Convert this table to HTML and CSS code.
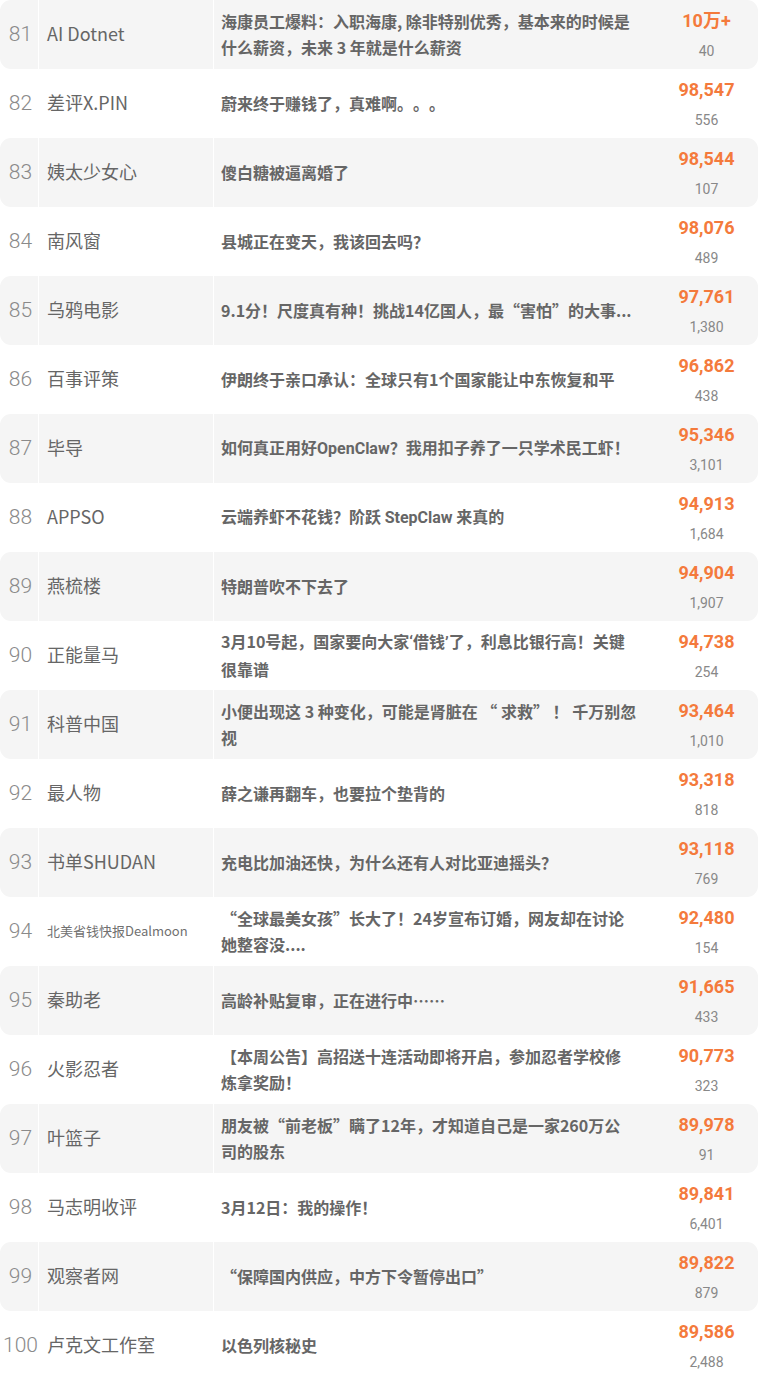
FILE: index.html
```html
<!DOCTYPE html>
<html lang="zh-CN">
<head>
<meta charset="utf-8">
<title>排行</title>
<link rel="stylesheet" href="styles.css">
</head>
<body>
<div class="list">
  <div class="row shade"><div class="rank">81</div><div class="name">AI Dotnet</div><div class="title"><p class="text">海康员工爆料：入职海康, 除非特别优秀，基本来的时候是<br>什么薪资，未来 3 年就是什么薪资</p></div><div class="nums"><span class="main">10万+</span><span class="sub">40</span></div></div>
  <div class="row"><div class="rank">82</div><div class="name">差评X.PIN</div><div class="title"><p class="text">蔚来终于赚钱了，真难啊。。。</p></div><div class="nums"><span class="main">98,547</span><span class="sub">556</span></div></div>
  <div class="row shade"><div class="rank">83</div><div class="name">姨太少女心</div><div class="title"><p class="text">傻白糖被逼离婚了</p></div><div class="nums"><span class="main">98,544</span><span class="sub">107</span></div></div>
  <div class="row"><div class="rank">84</div><div class="name">南风窗</div><div class="title"><p class="text">县城正在变天，我该回去吗？</p></div><div class="nums"><span class="main">98,076</span><span class="sub">489</span></div></div>
  <div class="row shade"><div class="rank">85</div><div class="name">乌鸦电影</div><div class="title"><p class="text">9.1分！尺度真有种！挑战14亿国人，最“害怕”的大事...</p></div><div class="nums"><span class="main">97,761</span><span class="sub">1,380</span></div></div>
  <div class="row"><div class="rank">86</div><div class="name">百事评策</div><div class="title"><p class="text">伊朗终于亲口承认：全球只有1个国家能让中东恢复和平</p></div><div class="nums"><span class="main">96,862</span><span class="sub">438</span></div></div>
  <div class="row shade"><div class="rank">87</div><div class="name">毕导</div><div class="title"><p class="text">如何真正用好<span class="latin">OpenClaw</span>？我用扣子养了一只学术民工虾！</p></div><div class="nums"><span class="main">95,346</span><span class="sub">3,101</span></div></div>
  <div class="row"><div class="rank">88</div><div class="name">APPSO</div><div class="title"><p class="text">云端养虾不花钱？阶跃 <span class="latin">StepClaw</span> 来真的</p></div><div class="nums"><span class="main">94,913</span><span class="sub">1,684</span></div></div>
  <div class="row shade"><div class="rank">89</div><div class="name">燕梳楼</div><div class="title"><p class="text">特朗普吹不下去了</p></div><div class="nums"><span class="main">94,904</span><span class="sub">1,907</span></div></div>
  <div class="row"><div class="rank">90</div><div class="name">正能量马</div><div class="title"><p class="text">3月10号起，国家要向大家<span class="latin">‘</span>借钱<span class="latin">’</span>了，利息比银行高！关键<br>很靠谱</p></div><div class="nums"><span class="main">94,738</span><span class="sub">254</span></div></div>
  <div class="row shade"><div class="rank">91</div><div class="name">科普中国</div><div class="title"><p class="text">小便出现这 3 种变化，可能是肾脏在 “ 求救” ！ 千万别忽<br>视</p></div><div class="nums"><span class="main">93,464</span><span class="sub">1,010</span></div></div>
  <div class="row"><div class="rank">92</div><div class="name">最人物</div><div class="title"><p class="text">薛之谦再翻车，也要拉个垫背的</p></div><div class="nums"><span class="main">93,318</span><span class="sub">818</span></div></div>
  <div class="row shade"><div class="rank">93</div><div class="name">书单SHUDAN</div><div class="title"><p class="text">充电比加油还快，为什么还有人对比亚迪摇头？</p></div><div class="nums"><span class="main">93,118</span><span class="sub">769</span></div></div>
  <div class="row"><div class="rank">94</div><div class="name small">北美省钱快报Dealmoon</div><div class="title"><p class="text">“全球最美女孩”长大了！24岁宣布订婚，网友却在讨论<br>她整容没....</p></div><div class="nums"><span class="main">92,480</span><span class="sub">154</span></div></div>
  <div class="row shade"><div class="rank">95</div><div class="name">秦助老</div><div class="title"><p class="text">高龄补贴复审，正在进行中……</p></div><div class="nums"><span class="main">91,665</span><span class="sub">433</span></div></div>
  <div class="row"><div class="rank">96</div><div class="name">火影忍者</div><div class="title"><p class="text">【本周公告】高招送十连活动即将开启，参加忍者学校修<br>炼拿奖励！</p></div><div class="nums"><span class="main">90,773</span><span class="sub">323</span></div></div>
  <div class="row shade"><div class="rank">97</div><div class="name">叶篮子</div><div class="title"><p class="text">朋友被“前老板”瞒了12年，才知道自己是一家260万公<br>司的股东</p></div><div class="nums"><span class="main">89,978</span><span class="sub">91</span></div></div>
  <div class="row"><div class="rank">98</div><div class="name">马志明收评</div><div class="title"><p class="text">3月12日：我的操作！</p></div><div class="nums"><span class="main">89,841</span><span class="sub">6,401</span></div></div>
  <div class="row shade"><div class="rank">99</div><div class="name">观察者网</div><div class="title"><p class="text">“保障国内供应，中方下令暂停出口”</p></div><div class="nums"><span class="main">89,822</span><span class="sub">879</span></div></div>
  <div class="row"><div class="rank">100</div><div class="name">卢克文工作室</div><div class="title"><p class="text">以色列核秘史</p></div><div class="nums"><span class="main">89,586</span><span class="sub">2,488</span></div></div>
</div>
</body>
</html>
```
FILE: styles.css
```css
html, body {
  margin: 0;
  padding: 0;
  background: #ffffff;
}
body {
  font-family: Roboto, "Noto Sans CJK SC", sans-serif;
  color: #666666;
  width: 758px;
  overflow: hidden;
}
.list {
  display: flex;
  flex-direction: column;
}
.row {
  display: grid;
  grid-template-columns: 38px 175px 442px 103px;
  height: 69px;
  border-radius: 11px;
  overflow: hidden;
}
.row.shade {
  background: #f5f5f5;
}
.rank {
  display: flex;
  align-items: center;
  justify-content: center;
  font-family: Roboto, sans-serif;
  font-weight: 300;
  font-size: 21px;
  color: #8a8a8a;
  padding-left: 3px;
  padding-bottom: 2px;
}
.name {
  display: flex;
  align-items: center;
  border-left: 1px solid #ffffff;
  padding-left: 8px;
  padding-bottom: 3px;
  font-family: "Noto Sans CJK SC", sans-serif;
  font-size: 18px;
  color: #666666;
  white-space: nowrap;
  overflow: hidden;
}
.name.small {
  font-size: 13px;
  color: #707070;
}
.title {
  display: flex;
  align-items: center;
  border-left: 1px solid #ffffff;
  padding: 0 10px 2px 7px;
  overflow: hidden;
}
.text {
  margin: 0;
  font-family: "Noto Sans CJK SC", sans-serif;
  font-weight: 700;
  font-size: 16px;
  line-height: 26px;
  color: #666666;
  white-space: nowrap;
  text-spacing-trim: space-all;
}
.latin {
  font-family: Roboto, sans-serif;
  font-weight: 700;
}
.nums {
  display: flex;
  flex-direction: column;
  align-items: center;
  padding-top: 9px;
}
.main {
  font-family: Roboto, "Noto Sans CJK SC", sans-serif;
  font-weight: 700;
  font-size: 18px;
  line-height: 24px;
  color: #f47a3c;
}
.sub {
  font-family: Roboto, sans-serif;
  font-weight: 400;
  font-size: 14px;
  line-height: 20px;
  margin-top: 8px;
  color: #888888;
}
```
